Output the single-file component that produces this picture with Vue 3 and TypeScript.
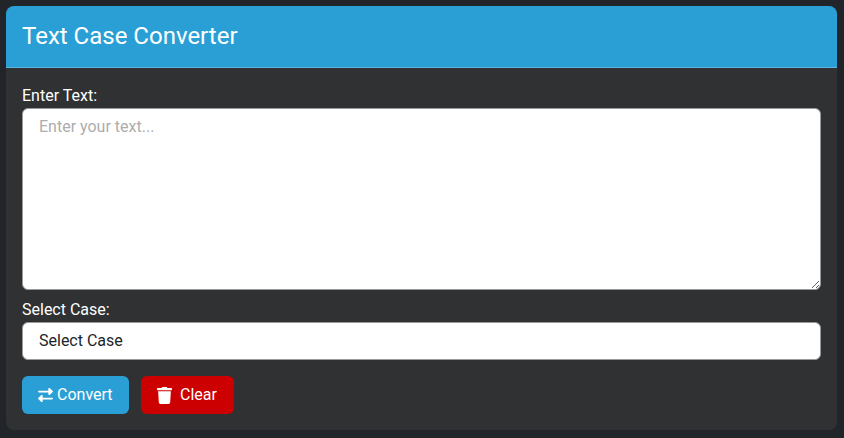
<script setup lang="ts">
import { ref } from 'vue'

const text = ref<string>('')
const selected = ref<string>('')
const cases: string[] = ['Uppercase', 'Lowercase', 'Title Case', 'Sentence Case']
</script>

<template>
  <div class="page">
    <section class="card">
      <header class="card-header"><h1>Text Case Converter</h1></header>
      <div class="card-body">
        <div class="group">
          <label for="input-text">Enter Text:</label>
          <textarea id="input-text" v-model="text" placeholder="Enter your text..."></textarea>
        </div>
        <div class="group">
          <label for="case-select">Select Case:</label>
          <select id="case-select" v-model="selected">
            <option value="">Select Case</option>
            <option v-for="c in cases" :key="c" :value="c">{{ c }}</option>
          </select>
        </div>
        <div class="actions">
          <button type="button" class="btn btn-convert">
            <svg class="icon-convert" viewBox="0 0 512 512" preserveAspectRatio="none" aria-hidden="true"><path fill="currentColor" d="M32 96l320 0V32c0-12.9 7.8-24.6 19.8-29.6s25.7-2.2 34.9 6.9l96 96c6 6 9.4 14.1 9.4 22.6s-3.4 16.6-9.4 22.6l-96 96c-9.2 9.2-22.9 11.9-34.9 6.9s-19.8-16.6-19.8-29.6V160L32 160c-17.7 0-32-14.3-32-32s14.3-32 32-32zM480 352c17.7 0 32 14.3 32 32s-14.3 32-32 32H160v64c0 12.9-7.8 24.6-19.8 29.6s-25.7 2.2-34.9-6.9l-96-96c-6-6-9.4-14.1-9.4-22.6s3.4-16.6 9.4-22.6l96-96c9.2-9.2 22.9-11.9 34.9-6.9s19.8 16.6 19.8 29.6l0 64H480z"/></svg>
            <span>Convert</span>
          </button>
          <button type="button" class="btn btn-clear" @click="text = ''">
            <svg class="icon-clear" viewBox="0 0 448 512" aria-hidden="true"><path fill="currentColor" d="M432 32H312l-9.4-18.7A24 24 0 0 0 281.1 0H166.8a23.72 23.72 0 0 0-21.4 13.3L136 32H16A16 16 0 0 0 0 48v32a16 16 0 0 0 16 16h416a16 16 0 0 0 16-16V48a16 16 0 0 0-16-16zM53.2 467a48 48 0 0 0 47.9 45h245.8a48 48 0 0 0 47.9-45L416 128H32z"/></svg>
            <span>Clear</span>
          </button>
        </div>
      </div>
    </section>
  </div>
</template>

<style>
html, body { background: #212529; }
</style>

<style scoped>
.page {
  padding: 6px 7px 8px 6px;
  font-family: Roboto, "Liberation Sans", sans-serif;
  font-size: 16px;
  line-height: 24px;
  color: #fff;
}
.card {
  background: #303133;
  border-radius: 8px;
}
.card-header {
  background: #2a9fd6;
  height: 61px;
  border-bottom: 1px solid #59b4de;
  border-radius: 8px 8px 0 0;
  padding: 0 16px;
  display: flex;
  align-items: center;
}
h1 { margin: 0; font-size: 24px; font-weight: 400; line-height: 29px; }
.card-body { padding: 16px; }
.group { margin-bottom: 8px; }
label { display: block; height: 24px; }
textarea, select {
  display: block;
  width: 100%;
  box-sizing: border-box;
  border: 1px solid #999;
  border-radius: 6px;
  background: #fff;
  font: inherit;
  color: #212529;
  padding: 6px 16px;
  outline: none;
}
textarea { height: 182px; resize: vertical; }
textarea::placeholder { color: #adadad; opacity: 1; }
select { height: 38px; appearance: none; }
.actions { display: flex; gap: 12px; padding-top: 8px; }
.btn {
  height: 38px;
  box-sizing: border-box;
  border: 0;
  border-radius: 6px;
  padding: 0 0 0 16px;
  display: flex;
  align-items: center;
  color: #fff;
  font: inherit;
}
.btn-convert { background: #2a9fd6; width: 107px; gap: 4px; }
.btn-clear { background: #cc0000; width: 93px; gap: 8px; }
.icon-convert { width: 15px; height: 14px; flex: none; }
.icon-clear { width: 15px; height: 17px; flex: none; }
</style>
